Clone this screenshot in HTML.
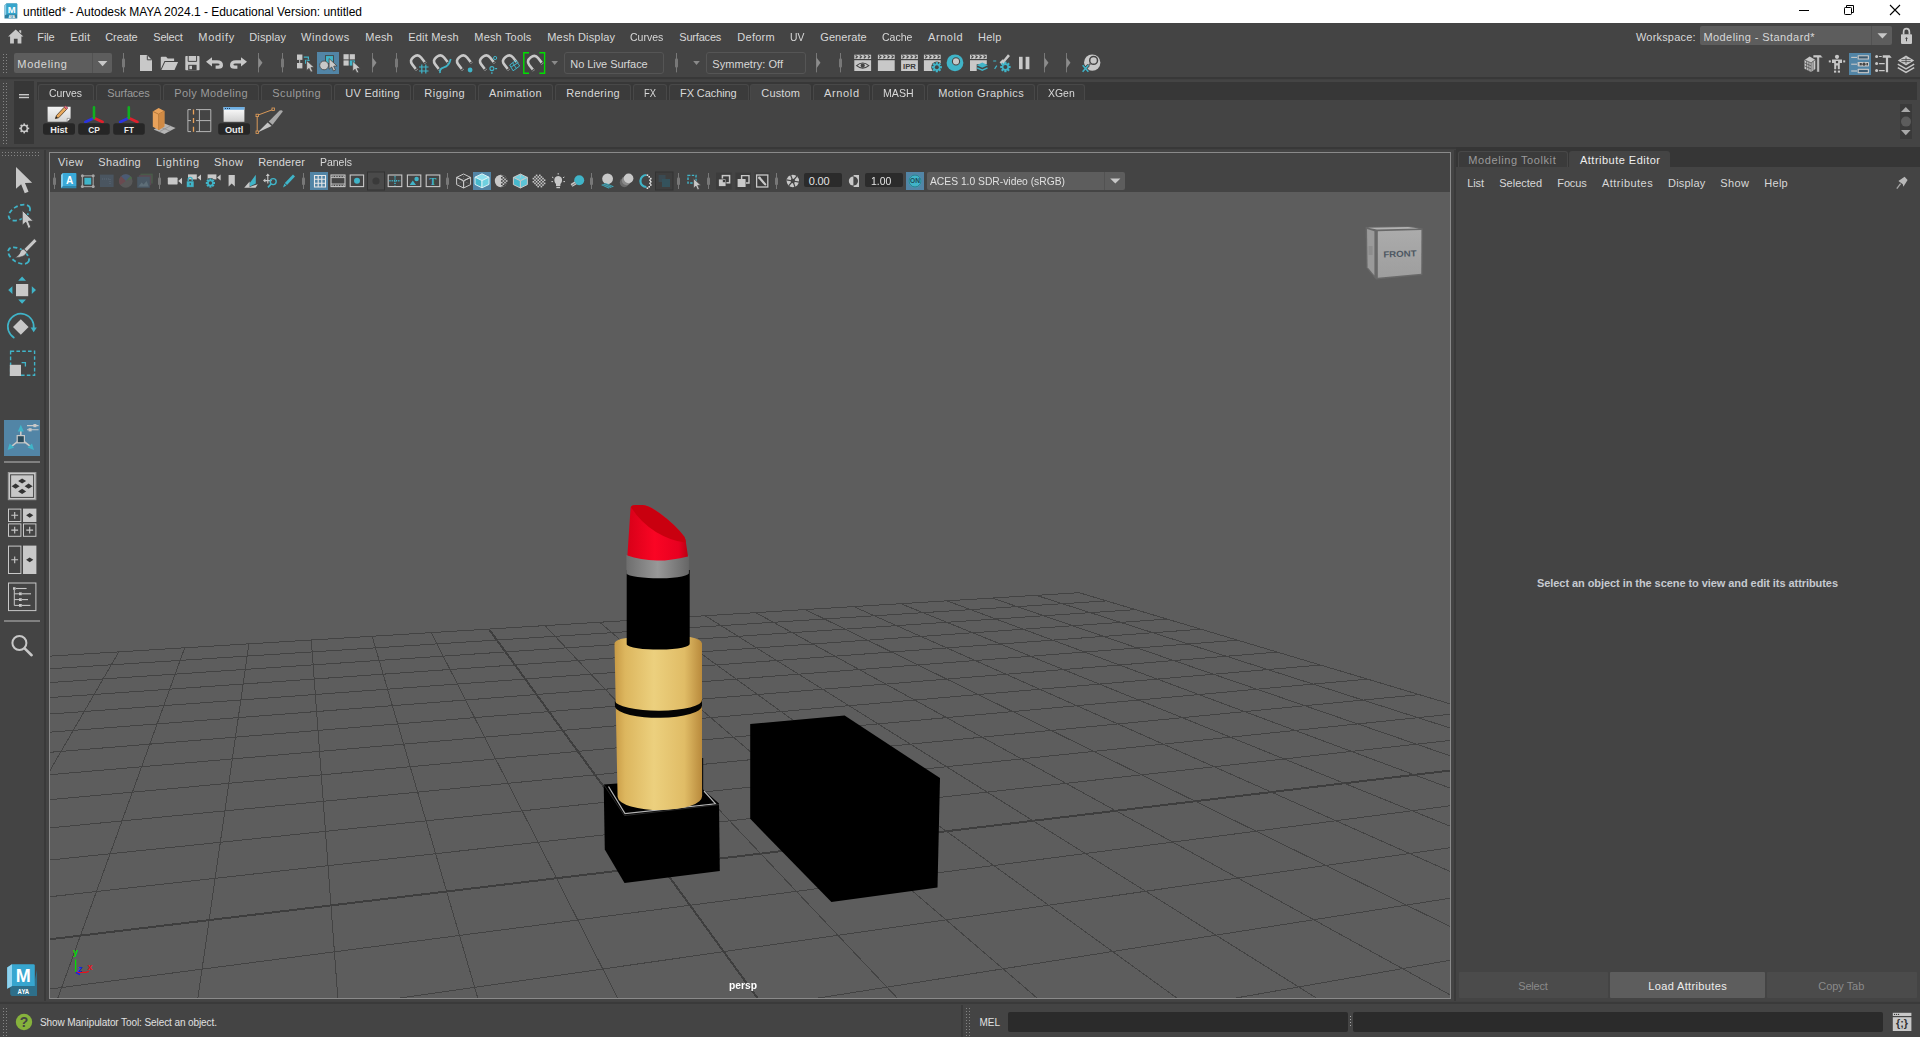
<!DOCTYPE html>
<html><head><meta charset="utf-8"><title>Maya</title>
<style>
html,body{margin:0;padding:0;}
body{width:1920px;height:1037px;overflow:hidden;background:#444444;position:relative;font-family:"Liberation Sans",sans-serif;}
body>div,body>span,body>svg{position:absolute;display:block;}
body>span{white-space:pre;}
svg{overflow:visible;}
</style></head><body>
<div style="left:0px;top:0px;width:1920px;height:23px;background:#ffffff;"></div>
<span style="left:23px;top:6px;font-size:12px;line-height:12px;color:#000000;letter-spacing:-0.023px;">untitled* - Autodesk MAYA 2024.1 - Educational Version: untitled</span>
<span style="left:37.3px;top:32px;font-size:11px;line-height:11px;color:#d8d8d8;letter-spacing:-0.108px;">File</span>
<span style="left:70.3px;top:32px;font-size:11px;line-height:11px;color:#d8d8d8;letter-spacing:0.248px;">Edit</span>
<span style="left:105.3px;top:32px;font-size:11px;line-height:11px;color:#d8d8d8;letter-spacing:-0.123px;">Create</span>
<span style="left:153.3px;top:32px;font-size:11px;line-height:11px;color:#d8d8d8;letter-spacing:-0.234px;">Select</span>
<span style="left:198.3px;top:32px;font-size:11px;line-height:11px;color:#d8d8d8;letter-spacing:0.720px;">Modify</span>
<span style="left:249.3px;top:32px;font-size:11px;line-height:11px;color:#d8d8d8;letter-spacing:0.106px;">Display</span>
<span style="left:301px;top:32px;font-size:11px;line-height:11px;color:#d8d8d8;letter-spacing:0.613px;">Windows</span>
<span style="left:365.3px;top:32px;font-size:11px;line-height:11px;color:#d8d8d8;letter-spacing:0.167px;">Mesh</span>
<span style="left:408.3px;top:32px;font-size:11px;line-height:11px;color:#d8d8d8;letter-spacing:0.186px;">Edit Mesh</span>
<span style="left:474.3px;top:32px;font-size:11px;line-height:11px;color:#d8d8d8;letter-spacing:0.174px;">Mesh Tools</span>
<span style="left:547.3px;top:32px;font-size:11px;line-height:11px;color:#d8d8d8;letter-spacing:0.153px;">Mesh Display</span>
<span style="left:630px;top:32px;font-size:11px;line-height:11px;color:#d8d8d8;transform:scaleX(0.9557);transform-origin:0 0;">Curves</span>
<span style="left:679.3px;top:32px;font-size:11px;line-height:11px;color:#d8d8d8;letter-spacing:-0.201px;">Surfaces</span>
<span style="left:737.3px;top:32px;font-size:11px;line-height:11px;color:#d8d8d8;letter-spacing:0.268px;">Deform</span>
<span style="left:790.3px;top:32px;font-size:11px;line-height:11px;color:#d8d8d8;transform:scaleX(0.9423);transform-origin:0 0;">UV</span>
<span style="left:820.3px;top:32px;font-size:11px;line-height:11px;color:#d8d8d8;letter-spacing:0.077px;">Generate</span>
<span style="left:882.3px;top:32px;font-size:11px;line-height:11px;color:#d8d8d8;transform:scaleX(0.9561);transform-origin:0 0;">Cache</span>
<span style="left:928px;top:32px;font-size:11px;line-height:11px;color:#d8d8d8;letter-spacing:0.581px;">Arnold</span>
<span style="left:978px;top:32px;font-size:11px;line-height:11px;color:#d8d8d8;letter-spacing:0.226px;">Help</span>
<span style="left:1636px;top:32px;font-size:11px;line-height:11px;color:#d8d8d8;letter-spacing:0.181px;">Workspace:</span>
<div style="left:1700px;top:26px;width:192px;height:19px;background:#5d5d5d;border-radius:2px;"></div>
<div style="left:1871px;top:26px;width:1px;height:19px;background:#525252;"></div>
<span style="left:1703.5px;top:32px;font-size:11px;line-height:11px;color:#d8d8d8;letter-spacing:0.403px;">Modeling - Standard*</span>
<div style="left:14px;top:53px;width:98px;height:20px;background:#5d5d5d;border-radius:2px;"></div>
<div style="left:92px;top:53px;width:1px;height:20px;background:#525252;"></div>
<span style="left:17.3px;top:59px;font-size:11px;line-height:11px;color:#d8d8d8;letter-spacing:0.709px;">Modeling</span>
<div style="left:564px;top:52px;width:100px;height:22px;background:#444444;border:1px solid #555555;border-radius:3px;box-sizing:border-box;"></div>
<span style="left:570.3px;top:59px;font-size:11px;line-height:11px;color:#d8d8d8;letter-spacing:-0.062px;">No Live Surface</span>
<div style="left:706px;top:52px;width:100px;height:22px;background:#444444;border:1px solid #555555;border-radius:3px;box-sizing:border-box;"></div>
<span style="left:712.3px;top:59px;font-size:11px;line-height:11px;color:#d8d8d8;letter-spacing:0.051px;">Symmetry: Off</span>
<div style="left:0px;top:77px;width:1920px;height:2px;background:#383838;"></div>
<div style="left:0px;top:79px;width:1920px;height:1px;background:#414141;"></div>
<div style="left:14px;top:81px;width:20px;height:63px;background:#373737;"></div>
<div style="left:37px;top:82px;width:1880px;height:18px;background:#373737;"></div>
<div style="left:38px;top:84px;width:56px;height:16px;background:#3b3b3b;border:1px solid #484848;border-bottom:none;border-radius:3px 3px 0 0;box-sizing:border-box;"></div>
<span style="left:49.3px;top:88px;font-size:11px;line-height:11px;color:#d8d8d8;transform:scaleX(0.9471);transform-origin:0 0;">Curves</span>
<div style="left:96px;top:84px;width:65px;height:16px;background:#3b3b3b;border:1px solid #484848;border-bottom:none;border-radius:3px 3px 0 0;box-sizing:border-box;"></div>
<span style="left:107.3px;top:88px;font-size:11px;line-height:11px;color:#9a9a9a;letter-spacing:-0.144px;">Surfaces</span>
<div style="left:163px;top:84px;width:96px;height:16px;background:#3b3b3b;border:1px solid #484848;border-bottom:none;border-radius:3px 3px 0 0;box-sizing:border-box;"></div>
<span style="left:174.3px;top:88px;font-size:11px;line-height:11px;color:#9a9a9a;letter-spacing:0.359px;">Poly Modeling</span>
<div style="left:261px;top:84px;width:71px;height:16px;background:#3b3b3b;border:1px solid #484848;border-bottom:none;border-radius:3px 3px 0 0;box-sizing:border-box;"></div>
<span style="left:272.3px;top:88px;font-size:11px;line-height:11px;color:#9a9a9a;letter-spacing:0.394px;">Sculpting</span>
<div style="left:334px;top:84px;width:77px;height:16px;background:#3b3b3b;border:1px solid #484848;border-bottom:none;border-radius:3px 3px 0 0;box-sizing:border-box;"></div>
<span style="left:345.3px;top:88px;font-size:11px;line-height:11px;color:#d8d8d8;letter-spacing:0.270px;">UV Editing</span>
<div style="left:413px;top:84px;width:63px;height:16px;background:#3b3b3b;border:1px solid #484848;border-bottom:none;border-radius:3px 3px 0 0;box-sizing:border-box;"></div>
<span style="left:424.3px;top:88px;font-size:11px;line-height:11px;color:#d8d8d8;letter-spacing:0.517px;">Rigging</span>
<div style="left:478px;top:84px;width:75px;height:16px;background:#3b3b3b;border:1px solid #484848;border-bottom:none;border-radius:3px 3px 0 0;box-sizing:border-box;"></div>
<span style="left:489px;top:88px;font-size:11px;line-height:11px;color:#d8d8d8;letter-spacing:0.473px;">Animation</span>
<div style="left:555px;top:84px;width:76px;height:16px;background:#3b3b3b;border:1px solid #484848;border-bottom:none;border-radius:3px 3px 0 0;box-sizing:border-box;"></div>
<span style="left:566.3px;top:88px;font-size:11px;line-height:11px;color:#d8d8d8;letter-spacing:0.331px;">Rendering</span>
<div style="left:633px;top:84px;width:34px;height:16px;background:#3b3b3b;border:1px solid #484848;border-bottom:none;border-radius:3px 3px 0 0;box-sizing:border-box;"></div>
<span style="left:644px;top:88px;font-size:11px;line-height:11px;color:#d8d8d8;transform:scaleX(0.8537);transform-origin:0 0;">FX</span>
<div style="left:669px;top:84px;width:80px;height:16px;background:#3b3b3b;border:1px solid #484848;border-bottom:none;border-radius:3px 3px 0 0;box-sizing:border-box;"></div>
<span style="left:680px;top:88px;font-size:11px;line-height:11px;color:#d8d8d8;letter-spacing:-0.085px;">FX Caching</span>
<div style="left:750px;top:84px;width:61px;height:16px;background:#444444;border:1px solid #484848;border-bottom:none;border-radius:3px 3px 0 0;box-sizing:border-box;"></div>
<span style="left:761.3px;top:88px;font-size:11px;line-height:11px;color:#d8d8d8;letter-spacing:0.160px;">Custom</span>
<div style="left:813px;top:84px;width:57px;height:16px;background:#3b3b3b;border:1px solid #484848;border-bottom:none;border-radius:3px 3px 0 0;box-sizing:border-box;"></div>
<span style="left:824px;top:88px;font-size:11px;line-height:11px;color:#d8d8d8;letter-spacing:0.641px;">Arnold</span>
<div style="left:872px;top:84px;width:53px;height:16px;background:#3b3b3b;border:1px solid #484848;border-bottom:none;border-radius:3px 3px 0 0;box-sizing:border-box;"></div>
<span style="left:883.3px;top:88px;font-size:11px;line-height:11px;color:#d8d8d8;transform:scaleX(0.9659);transform-origin:0 0;">MASH</span>
<div style="left:927px;top:84px;width:108px;height:16px;background:#3b3b3b;border:1px solid #484848;border-bottom:none;border-radius:3px 3px 0 0;box-sizing:border-box;"></div>
<span style="left:938.3px;top:88px;font-size:11px;line-height:11px;color:#d8d8d8;letter-spacing:0.379px;">Motion Graphics</span>
<div style="left:1037px;top:84px;width:48px;height:16px;background:#3b3b3b;border:1px solid #484848;border-bottom:none;border-radius:3px 3px 0 0;box-sizing:border-box;"></div>
<span style="left:1048px;top:88px;font-size:11px;line-height:11px;color:#d8d8d8;transform:scaleX(0.9492);transform-origin:0 0;">XGen</span>
<div style="left:0px;top:147px;width:1920px;height:2px;background:#383838;"></div>
<div style="left:0px;top:149px;width:1920px;height:1px;background:#414141;"></div>
<div style="left:44px;top:150px;width:2px;height:852px;background:#3a3a3a;"></div>
<div style="left:4px;top:420px;width:36px;height:36px;background:#5285a6;"></div>
<div style="left:4px;top:461px;width:36px;height:2px;background:#808080;"></div>
<div style="left:4px;top:620px;width:36px;height:2px;background:#808080;"></div>
<div style="left:49px;top:152px;width:1402px;height:847px;background:#444444;border:1px solid #8a8a8a;box-sizing:border-box;"></div>
<span style="left:58px;top:157px;font-size:11px;line-height:11px;color:#d8d8d8;letter-spacing:0.452px;">View</span>
<span style="left:98.3px;top:157px;font-size:11px;line-height:11px;color:#d8d8d8;letter-spacing:0.339px;">Shading</span>
<span style="left:156px;top:157px;font-size:11px;line-height:11px;color:#d8d8d8;letter-spacing:0.639px;">Lighting</span>
<span style="left:214px;top:157px;font-size:11px;line-height:11px;color:#d8d8d8;letter-spacing:0.495px;">Show</span>
<span style="left:258.3px;top:157px;font-size:11px;line-height:11px;color:#d8d8d8;letter-spacing:0.120px;">Renderer</span>
<span style="left:320.3px;top:157px;font-size:11px;line-height:11px;color:#d8d8d8;transform:scaleX(0.9515);transform-origin:0 0;">Panels</span>
<div style="left:1454px;top:150px;width:2px;height:852px;background:#3a3a3a;"></div>
<div style="left:1456px;top:147px;width:464px;height:20px;background:#363636;"></div>
<div style="left:1458px;top:151px;width:110px;height:16px;background:#3b3b3b;border:1px solid #484848;border-bottom:none;border-radius:3px 3px 0 0;box-sizing:border-box;"></div>
<div style="left:1569px;top:151px;width:101px;height:16px;background:#444444;border-radius:3px 3px 0 0;"></div>
<span style="left:1468.3px;top:155px;font-size:11px;line-height:11px;color:#9a9a9a;letter-spacing:0.582px;">Modeling Toolkit</span>
<span style="left:1580px;top:155px;font-size:11px;line-height:11px;color:#eeeeee;letter-spacing:0.483px;">Attribute Editor</span>
<span style="left:1467.3px;top:178px;font-size:11px;line-height:11px;color:#d8d8d8;letter-spacing:-0.139px;">List</span>
<span style="left:1499.3px;top:178px;font-size:11px;line-height:11px;color:#d8d8d8;letter-spacing:-0.015px;">Selected</span>
<span style="left:1557.3px;top:178px;font-size:11px;line-height:11px;color:#d8d8d8;letter-spacing:-0.138px;">Focus</span>
<span style="left:1602px;top:178px;font-size:11px;line-height:11px;color:#d8d8d8;letter-spacing:0.470px;">Attributes</span>
<span style="left:1668px;top:178px;font-size:11px;line-height:11px;color:#d8d8d8;letter-spacing:0.206px;">Display</span>
<span style="left:1720.3px;top:178px;font-size:11px;line-height:11px;color:#d8d8d8;letter-spacing:0.395px;">Show</span>
<span style="left:1764.3px;top:178px;font-size:11px;line-height:11px;color:#d8d8d8;letter-spacing:0.260px;">Help</span>
<span style="left:1537px;top:578px;font-size:11px;line-height:11px;color:#c6cad0;letter-spacing:-0.067px;font-weight:bold;">Select an object in the scene to view and edit its attributes</span>
<div style="left:1459px;top:972px;width:149px;height:26px;background:#4b4b4b;border-radius:1px;"></div>
<div style="left:1610px;top:972px;width:155px;height:26px;background:#5d5d5d;border-radius:1px;"></div>
<div style="left:1767px;top:972px;width:150px;height:26px;background:#4b4b4b;border-radius:1px;"></div>
<span style="left:1518.3px;top:981px;font-size:11px;line-height:11px;color:#8a8a8a;letter-spacing:-0.234px;">Select</span>
<span style="left:1648.3px;top:981px;font-size:11px;line-height:11px;color:#eeeeee;letter-spacing:0.358px;">Load Attributes</span>
<span style="left:1818.3px;top:981px;font-size:11px;line-height:11px;color:#8a8a8a;letter-spacing:-0.039px;">Copy Tab</span>
<div style="left:0px;top:1001px;width:1920px;height:1px;background:#424242;"></div>
<div style="left:0px;top:1002px;width:1920px;height:2px;background:#3a3a3a;"></div>
<div style="left:961px;top:1005px;width:2px;height:32px;background:#3a3a3a;"></div>
<span style="left:40px;top:1018px;font-size:10px;line-height:10px;color:#e0e0e0;letter-spacing:-0.090px;">Show Manipulator Tool: Select an object.</span>
<span style="left:979.5px;top:1018px;font-size:10px;line-height:10px;color:#e0e0e0;letter-spacing:-0.031px;">MEL</span>
<div style="left:1008px;top:1012px;width:340px;height:20px;background:#2b2b2b;border-radius:2px;"></div>
<div style="left:1353px;top:1012px;width:530px;height:20px;background:#2b2b2b;border-radius:2px;"></div>
<div style="left:804px;top:173px;width:38px;height:14px;background:#2b2b2b;border-radius:2px;"></div>
<div style="left:865px;top:173px;width:38px;height:14px;background:#2b2b2b;border-radius:2px;"></div>
<span style="left:808.8px;top:176px;font-size:11px;line-height:11px;color:#e4e4e4;letter-spacing:-0.203px;">0.00</span>
<span style="left:870.7px;top:176px;font-size:11px;line-height:11px;color:#e4e4e4;transform:scaleX(0.9482);transform-origin:0 0;">1.00</span>
<div style="left:927px;top:172px;width:198px;height:18px;background:#5d5d5d;border-radius:2px;"></div>
<div style="left:1104px;top:172px;width:1px;height:18px;background:#525252;"></div>
<span style="left:930px;top:176px;font-size:11px;line-height:11px;color:#e0e0e0;transform:scaleX(0.9358);transform-origin:0 0;">ACES 1.0 SDR-video (sRGB)</span>
<svg style="left:50px;top:192px;overflow:hidden" width="1400" height="806" viewBox="0 0 1400 806"><rect width="1400" height="806" fill="#5d5d5d"/><g shape-rendering="crispEdges"><line x1="-23795.3" y1="12871.6" x2="-369.8" y2="486.9" stroke="#434343" stroke-width="1"/><line x1="-1073.1" y1="12888.6" x2="4254.1" y2="1367.0" stroke="#434343" stroke-width="1"/><line x1="-21019.9" y1="12873.7" x2="-291.2" y2="482.1" stroke="#434343" stroke-width="1"/><line x1="-9327.9" y1="12882.4" x2="3669.9" y2="1192.0" stroke="#434343" stroke-width="1"/><line x1="-18244.5" y1="12875.8" x2="-214.9" y2="477.4" stroke="#434343" stroke-width="1"/><line x1="-17582.7" y1="12876.3" x2="3234.1" y2="1061.4" stroke="#434343" stroke-width="1"/><line x1="-15469.1" y1="12877.8" x2="-140.8" y2="472.8" stroke="#434343" stroke-width="1"/><line x1="-16370.1" y1="8946.0" x2="2896.6" y2="960.3" stroke="#434343" stroke-width="1"/><line x1="-12693.7" y1="12879.9" x2="-68.9" y2="468.4" stroke="#434343" stroke-width="1"/><line x1="-7146.2" y1="4069.5" x2="2627.5" y2="879.6" stroke="#434343" stroke-width="1"/><line x1="-9918.3" y1="12882.0" x2="0.9" y2="464.1" stroke="#434343" stroke-width="1"/><line x1="-4508.9" y1="2675.2" x2="2407.8" y2="813.8" stroke="#434343" stroke-width="1"/><line x1="-7142.9" y1="12884.0" x2="68.8" y2="459.9" stroke="#434343" stroke-width="1"/><line x1="-3259.4" y1="2014.6" x2="2225.2" y2="759.1" stroke="#434343" stroke-width="1"/><line x1="-4367.5" y1="12886.1" x2="134.7" y2="455.8" stroke="#434343" stroke-width="1"/><line x1="-2530.4" y1="1629.2" x2="2071.0" y2="712.9" stroke="#434343" stroke-width="1"/><line x1="-1592.1" y1="12888.2" x2="198.9" y2="451.9" stroke="#434343" stroke-width="1"/><line x1="-2052.8" y1="1376.6" x2="1939.0" y2="673.3" stroke="#434343" stroke-width="1"/><line x1="871.5" y1="8682.8" x2="261.3" y2="448.0" stroke="#434343" stroke-width="1"/><line x1="-1715.6" y1="1198.4" x2="1824.8" y2="639.1" stroke="#434343" stroke-width="1"/><line x1="2009.7" y1="6221.1" x2="322.1" y2="444.3" stroke="#434343" stroke-width="1"/><line x1="-1464.9" y1="1065.8" x2="1724.9" y2="609.2" stroke="#434343" stroke-width="1"/><line x1="2637.4" y1="4863.5" x2="381.2" y2="440.6" stroke="#434343" stroke-width="1"/><line x1="-1271.1" y1="963.4" x2="1636.9" y2="582.8" stroke="#434343" stroke-width="1"/><line x1="3035.2" y1="4003.3" x2="438.9" y2="437.1" stroke="#3e3e3e" stroke-width="2"/><line x1="-1116.9" y1="881.9" x2="1558.8" y2="559.4" stroke="#3e3e3e" stroke-width="2"/><line x1="3309.7" y1="3409.5" x2="495.0" y2="433.6" stroke="#434343" stroke-width="1"/><line x1="-991.2" y1="815.4" x2="1488.9" y2="538.5" stroke="#434343" stroke-width="1"/><line x1="3510.7" y1="2974.9" x2="549.7" y2="430.2" stroke="#434343" stroke-width="1"/><line x1="-886.9" y1="760.3" x2="1426.1" y2="519.6" stroke="#434343" stroke-width="1"/><line x1="3664.1" y1="2643.0" x2="603.1" y2="426.9" stroke="#434343" stroke-width="1"/><line x1="-798.8" y1="713.7" x2="1369.3" y2="502.6" stroke="#434343" stroke-width="1"/><line x1="3785.1" y1="2381.3" x2="655.1" y2="423.7" stroke="#434343" stroke-width="1"/><line x1="-723.5" y1="673.9" x2="1317.6" y2="487.1" stroke="#434343" stroke-width="1"/><line x1="3883.0" y1="2169.7" x2="705.8" y2="420.6" stroke="#434343" stroke-width="1"/><line x1="-658.4" y1="639.5" x2="1270.5" y2="473.0" stroke="#434343" stroke-width="1"/><line x1="3963.8" y1="1995.0" x2="755.4" y2="417.6" stroke="#434343" stroke-width="1"/><line x1="-601.5" y1="609.4" x2="1227.4" y2="460.1" stroke="#434343" stroke-width="1"/><line x1="4031.6" y1="1848.3" x2="803.7" y2="414.6" stroke="#434343" stroke-width="1"/><line x1="-551.4" y1="582.9" x2="1187.7" y2="448.2" stroke="#434343" stroke-width="1"/><line x1="4089.3" y1="1723.5" x2="850.9" y2="411.7" stroke="#434343" stroke-width="1"/><line x1="-506.9" y1="559.4" x2="1151.1" y2="437.2" stroke="#434343" stroke-width="1"/><line x1="4139.1" y1="1615.9" x2="897.0" y2="408.8" stroke="#434343" stroke-width="1"/><line x1="-467.2" y1="538.4" x2="1117.2" y2="427.1" stroke="#434343" stroke-width="1"/><line x1="4182.4" y1="1522.2" x2="942.1" y2="406.0" stroke="#434343" stroke-width="1"/><line x1="-431.5" y1="519.5" x2="1085.7" y2="417.6" stroke="#434343" stroke-width="1"/><line x1="4220.4" y1="1439.9" x2="986.1" y2="403.3" stroke="#434343" stroke-width="1"/><line x1="-399.2" y1="502.4" x2="1056.4" y2="408.9" stroke="#434343" stroke-width="1"/><line x1="4254.1" y1="1367.0" x2="1029.1" y2="400.7" stroke="#434343" stroke-width="1"/><line x1="-369.8" y1="486.9" x2="1029.1" y2="400.7" stroke="#434343" stroke-width="1"/></g><g id="models" transform="translate(-50,-192)"><defs>
<linearGradient id="gold" x1="0" x2="1" y1="0" y2="0"><stop offset="0" stop-color="#c89a45"/><stop offset="0.12" stop-color="#dcb65e"/><stop offset="0.45" stop-color="#ecd07e"/><stop offset="0.8" stop-color="#e0bc66"/><stop offset="1" stop-color="#b98a3c"/></linearGradient>
<linearGradient id="ring" x1="0" x2="1" y1="0" y2="0"><stop offset="0" stop-color="#6e6e6e"/><stop offset="0.5" stop-color="#989898"/><stop offset="1" stop-color="#666666"/></linearGradient>
<linearGradient id="red" x1="0" x2="1" y1="0" y2="0"><stop offset="0" stop-color="#d80018"/><stop offset="0.45" stop-color="#fa0524"/><stop offset="0.85" stop-color="#e80020"/><stop offset="1" stop-color="#b80012"/></linearGradient>
</defs><polygon points="750.2,724 844.6,715.5 940,778.1 937.5,887.4 831.4,902 750.2,818.8" fill="#000"/><polygon points="603.7,784.6 690,778 719,803.5 719.8,871 624.5,883 604.8,849.4" fill="#000"/><polyline points="608.5,786.5 625,813.5 715.5,803.8 704,791" fill="none" stroke="#b4b4b4" stroke-width="1.2"/><polyline points="604.2,785.2 624.5,815.6 719,804.6" fill="none" stroke="#2a2a2a" stroke-width="1"/><path d="M614.5,644 Q614.5,639 630,637.5 L690,637 Q701.8,639 702,643.5 L702,796 A42.2,13.6 0 0 1 617.6,797 Z" fill="url(#gold)"/><path d="M702.6,758 L702.6,796" stroke="#111" stroke-width="1.2"/><path d="M614.8,700.4 A43.6,10.6 0 0 0 702,699.8 L702,705.8 A43.6,12 0 0 1 615,707 Z" fill="#050505"/><path d="M626.7,570 L689.7,570 L689.7,643.6 A31.5,5.6 0 0 1 626.7,644.4 Z" fill="#000"/><path d="M626.4,555 L688.9,555.5 L688.9,572.6 A31.3,5.2 0 0 1 626.4,573.6 Z" fill="url(#ring)"/><path d="M630.6,507.5 Q631,505 636,505 L642.5,505 Q650,506 660,513.5 Q675,524.5 684.3,536.7 Q686,540 686,543 L688,556.4 Q672,560.5 657.2,560.6 Q640,560 627.4,555.6 Z" fill="url(#red)"/><path d="M631,507 Q631.5,505 636,505 L642.5,505 Q650,506 660,513.5 Q675,524.5 684.3,536.7 Q686,540 685.6,542.6 Q671,541 656,532 Q640,522 631,507 Z" fill="#c9000f"/></g></svg>
<span style="left:729px;top:980px;font-size:11px;line-height:11px;color:#ffffff;transform:scaleX(0.9348);transform-origin:0 0;font-weight:bold;">persp</span>
<svg style="left:0;top:0" width="1920" height="1037" viewBox="0 0 1920 1037"><g transform="translate(3.3,3)"><path d="M1.2,2.2 L3,0.6 L13.4,0.6 Q14,0.6 14,1.2 L14,15.4 L1.2,15.4 Z" fill="#2f7f9f"/><path d="M3,0.6 L13.2,0.6 Q13.8,0.6 13.8,1.2 L13.8,11.4 L3,11.4 Z" fill="#37a5cc"/><path d="M1.2,2.2 L3,0.6 L3,11.4 L1.2,12.6 Z" fill="#8fd0ea"/><text x="8.5" y="9.8" font-size="9.5" font-weight="bold" fill="#fff" text-anchor="middle" font-family="Liberation Sans, sans-serif">M</text><text x="8.4" y="14.8" font-size="3.4" font-weight="bold" fill="#fff" text-anchor="middle" font-family="Liberation Sans, sans-serif">AYA</text></g><path d="M1799,10.5 H1809" stroke="#000" stroke-width="1"/><rect x="1844.5" y="7.5" width="7" height="7" rx="0.8" fill="none" stroke="#000" stroke-width="1"/><path d="M1846.5,7 V5.5 H1853.5 V12.5 H1852" fill="none" stroke="#000" stroke-width="1"/><path d="M1890,5 L1900,15 M1900,5 L1890,15" stroke="#000" stroke-width="1.1"/><g transform="translate(8,29)"><path d="M7.7,0.4 L15.4,7.6 L13.4,7.6 L13.4,14.6 L9.6,14.6 L9.6,9.8 L5.9,9.8 L5.9,14.6 L2.1,14.6 L2.1,7.6 L0.1,7.6 Z M11.2,1.2 H13.2 V4.6 L11.2,2.8 Z" fill="#c8c8c8"/></g><path d="M1877.5,33.2 H1887.3 L1882.4,38.4 Z" fill="#c8c8c8"/><g transform="translate(1901,28)"><path d="M2.6,6.4 V4 Q2.6,0.6 5.5,0.6 Q8.4,0.6 8.4,4 V6.4" fill="none" stroke="#c8c8c8" stroke-width="1.7"/><rect x="0" y="6.3" width="11" height="9.6" rx="0.8" fill="#c8c8c8"/><path d="M5.5,9 L7,10.8 H6 V13.2 H5 V10.8 H4 Z" fill="#444"/></g><path d="M123.5,53 V72.4" stroke="#787878" stroke-width="1"/><rect x="122.0" y="58.6" width="3" height="8.8" rx="1" fill="#787878"/><path d="M282.5,53 V72.4" stroke="#787878" stroke-width="1"/><rect x="281.0" y="58.6" width="3" height="8.8" rx="1" fill="#787878"/><path d="M396.5,53 V72.4" stroke="#787878" stroke-width="1"/><rect x="395.0" y="58.6" width="3" height="8.8" rx="1" fill="#787878"/><path d="M676.5,53 V72.4" stroke="#787878" stroke-width="1"/><rect x="675.0" y="58.6" width="3" height="8.8" rx="1" fill="#787878"/><path d="M840.5,53 V72.4" stroke="#787878" stroke-width="1"/><rect x="839.0" y="58.6" width="3" height="8.8" rx="1" fill="#787878"/><path d="M258.5,53 V72.4" stroke="#787878" stroke-width="1"/><path d="M258.5,57.4 L262.5,62.8 L258.5,68.2 Z" fill="#8c8c8c"/><path d="M372.5,53 V72.4" stroke="#787878" stroke-width="1"/><path d="M372.5,57.4 L376.5,62.8 L372.5,68.2 Z" fill="#8c8c8c"/><path d="M816.5,53 V72.4" stroke="#787878" stroke-width="1"/><path d="M816.5,57.4 L820.5,62.8 L816.5,68.2 Z" fill="#8c8c8c"/><path d="M1044.5,53 V72.4" stroke="#787878" stroke-width="1"/><path d="M1044.5,57.4 L1048.5,62.8 L1044.5,68.2 Z" fill="#8c8c8c"/><path d="M1066.5,53 V72.4" stroke="#787878" stroke-width="1"/><path d="M1066.5,57.4 L1070.5,62.8 L1066.5,68.2 Z" fill="#8c8c8c"/><rect x="3" y="54" width="1" height="1" fill="#858585"/><rect x="6" y="54" width="1" height="1" fill="#858585"/><rect x="3" y="57" width="1" height="1" fill="#858585"/><rect x="6" y="57" width="1" height="1" fill="#858585"/><rect x="3" y="60" width="1" height="1" fill="#858585"/><rect x="6" y="60" width="1" height="1" fill="#858585"/><rect x="3" y="63" width="1" height="1" fill="#858585"/><rect x="6" y="63" width="1" height="1" fill="#858585"/><rect x="3" y="66" width="1" height="1" fill="#858585"/><rect x="6" y="66" width="1" height="1" fill="#858585"/><rect x="3" y="69" width="1" height="1" fill="#858585"/><rect x="6" y="69" width="1" height="1" fill="#858585"/><rect x="3" y="72" width="1" height="1" fill="#858585"/><rect x="6" y="72" width="1" height="1" fill="#858585"/><rect x="3" y="83" width="1" height="1" fill="#858585"/><rect x="6" y="83" width="1" height="1" fill="#858585"/><rect x="3" y="86" width="1" height="1" fill="#858585"/><rect x="6" y="86" width="1" height="1" fill="#858585"/><rect x="3" y="89" width="1" height="1" fill="#858585"/><rect x="6" y="89" width="1" height="1" fill="#858585"/><rect x="3" y="92" width="1" height="1" fill="#858585"/><rect x="6" y="92" width="1" height="1" fill="#858585"/><rect x="3" y="95" width="1" height="1" fill="#858585"/><rect x="6" y="95" width="1" height="1" fill="#858585"/><rect x="3" y="98" width="1" height="1" fill="#858585"/><rect x="6" y="98" width="1" height="1" fill="#858585"/><rect x="3" y="101" width="1" height="1" fill="#858585"/><rect x="6" y="101" width="1" height="1" fill="#858585"/><rect x="3" y="104" width="1" height="1" fill="#858585"/><rect x="6" y="104" width="1" height="1" fill="#858585"/><rect x="3" y="107" width="1" height="1" fill="#858585"/><rect x="6" y="107" width="1" height="1" fill="#858585"/><rect x="3" y="110" width="1" height="1" fill="#858585"/><rect x="6" y="110" width="1" height="1" fill="#858585"/><rect x="3" y="113" width="1" height="1" fill="#858585"/><rect x="6" y="113" width="1" height="1" fill="#858585"/><rect x="3" y="116" width="1" height="1" fill="#858585"/><rect x="6" y="116" width="1" height="1" fill="#858585"/><rect x="3" y="119" width="1" height="1" fill="#858585"/><rect x="6" y="119" width="1" height="1" fill="#858585"/><rect x="3" y="122" width="1" height="1" fill="#858585"/><rect x="6" y="122" width="1" height="1" fill="#858585"/><rect x="3" y="125" width="1" height="1" fill="#858585"/><rect x="6" y="125" width="1" height="1" fill="#858585"/><rect x="3" y="128" width="1" height="1" fill="#858585"/><rect x="6" y="128" width="1" height="1" fill="#858585"/><rect x="3" y="131" width="1" height="1" fill="#858585"/><rect x="6" y="131" width="1" height="1" fill="#858585"/><rect x="3" y="134" width="1" height="1" fill="#858585"/><rect x="6" y="134" width="1" height="1" fill="#858585"/><rect x="3" y="137" width="1" height="1" fill="#858585"/><rect x="6" y="137" width="1" height="1" fill="#858585"/><rect x="3" y="140" width="1" height="1" fill="#858585"/><rect x="6" y="140" width="1" height="1" fill="#858585"/><rect x="3" y="143" width="1" height="1" fill="#858585"/><rect x="6" y="143" width="1" height="1" fill="#858585"/><rect x="3" y="1008" width="1" height="1" fill="#858585"/><rect x="6" y="1008" width="1" height="1" fill="#858585"/><rect x="3" y="1011" width="1" height="1" fill="#858585"/><rect x="6" y="1011" width="1" height="1" fill="#858585"/><rect x="3" y="1014" width="1" height="1" fill="#858585"/><rect x="6" y="1014" width="1" height="1" fill="#858585"/><rect x="3" y="1017" width="1" height="1" fill="#858585"/><rect x="6" y="1017" width="1" height="1" fill="#858585"/><rect x="3" y="1020" width="1" height="1" fill="#858585"/><rect x="6" y="1020" width="1" height="1" fill="#858585"/><rect x="3" y="1023" width="1" height="1" fill="#858585"/><rect x="6" y="1023" width="1" height="1" fill="#858585"/><rect x="3" y="1026" width="1" height="1" fill="#858585"/><rect x="6" y="1026" width="1" height="1" fill="#858585"/><rect x="3" y="1029" width="1" height="1" fill="#858585"/><rect x="6" y="1029" width="1" height="1" fill="#858585"/><rect x="3" y="1032" width="1" height="1" fill="#858585"/><rect x="6" y="1032" width="1" height="1" fill="#858585"/><rect x="3" y="1035" width="1" height="1" fill="#858585"/><rect x="6" y="1035" width="1" height="1" fill="#858585"/><rect x="966" y="1008" width="1" height="1" fill="#858585"/><rect x="969" y="1008" width="1" height="1" fill="#858585"/><rect x="966" y="1011" width="1" height="1" fill="#858585"/><rect x="969" y="1011" width="1" height="1" fill="#858585"/><rect x="966" y="1014" width="1" height="1" fill="#858585"/><rect x="969" y="1014" width="1" height="1" fill="#858585"/><rect x="966" y="1017" width="1" height="1" fill="#858585"/><rect x="969" y="1017" width="1" height="1" fill="#858585"/><rect x="966" y="1020" width="1" height="1" fill="#858585"/><rect x="969" y="1020" width="1" height="1" fill="#858585"/><rect x="966" y="1023" width="1" height="1" fill="#858585"/><rect x="969" y="1023" width="1" height="1" fill="#858585"/><rect x="966" y="1026" width="1" height="1" fill="#858585"/><rect x="969" y="1026" width="1" height="1" fill="#858585"/><rect x="966" y="1029" width="1" height="1" fill="#858585"/><rect x="969" y="1029" width="1" height="1" fill="#858585"/><rect x="966" y="1032" width="1" height="1" fill="#858585"/><rect x="969" y="1032" width="1" height="1" fill="#858585"/><rect x="966" y="1035" width="1" height="1" fill="#858585"/><rect x="969" y="1035" width="1" height="1" fill="#858585"/><rect x="1350" y="1016" width="1" height="1" fill="#a8a8a8"/><rect x="1350" y="1019" width="1" height="1" fill="#a8a8a8"/><rect x="1350" y="1022" width="1" height="1" fill="#a8a8a8"/><rect x="1350" y="1025" width="1" height="1" fill="#a8a8a8"/><rect x="2" y="152" width="1" height="1" fill="#858585"/><rect x="2" y="155" width="1" height="1" fill="#858585"/><rect x="5" y="152" width="1" height="1" fill="#858585"/><rect x="5" y="155" width="1" height="1" fill="#858585"/><rect x="8" y="152" width="1" height="1" fill="#858585"/><rect x="8" y="155" width="1" height="1" fill="#858585"/><rect x="11" y="152" width="1" height="1" fill="#858585"/><rect x="11" y="155" width="1" height="1" fill="#858585"/><rect x="14" y="152" width="1" height="1" fill="#858585"/><rect x="14" y="155" width="1" height="1" fill="#858585"/><rect x="17" y="152" width="1" height="1" fill="#858585"/><rect x="17" y="155" width="1" height="1" fill="#858585"/><rect x="20" y="152" width="1" height="1" fill="#858585"/><rect x="20" y="155" width="1" height="1" fill="#858585"/><rect x="23" y="152" width="1" height="1" fill="#858585"/><rect x="23" y="155" width="1" height="1" fill="#858585"/><rect x="26" y="152" width="1" height="1" fill="#858585"/><rect x="26" y="155" width="1" height="1" fill="#858585"/><rect x="29" y="152" width="1" height="1" fill="#858585"/><rect x="29" y="155" width="1" height="1" fill="#858585"/><rect x="32" y="152" width="1" height="1" fill="#858585"/><rect x="32" y="155" width="1" height="1" fill="#858585"/><rect x="35" y="152" width="1" height="1" fill="#858585"/><rect x="35" y="155" width="1" height="1" fill="#858585"/><rect x="38" y="152" width="1" height="1" fill="#858585"/><rect x="38" y="155" width="1" height="1" fill="#858585"/><path d="M97.8,61 H107.4 L102.6,66.2 Z" fill="#c8c8c8"/><g transform="translate(139.5,55)"><path d="M0.5,0 H7.5 L12.5,5 V16 H0.5 Z" fill="#c8c8c8"/><path d="M7.8,0.4 V4.8 H12.2" fill="none" stroke="#444" stroke-width="1"/></g><g transform="translate(160.5,56.5)"><path d="M0.3,1 Q0.3,0.2 1.1,0.2 H5.6 L7.2,2 H13.6 V4.6 H4 L0.3,12.6 Z" fill="#c8c8c8"/><path d="M4.6,5.6 H17.6 L14,13.4 H0.9 Z" fill="#c8c8c8"/></g><g transform="translate(185,55.8)"><path d="M0.3,1 Q0.3,0.2 1.1,0.2 H13.7 Q14.5,0.2 14.5,1 V13.6 Q14.5,14.4 13.7,14.4 H1.1 Q0.3,14.4 0.3,13.6 Z" fill="#c8c8c8"/><path d="M3.2,0.2 V5.6 H11.6 V0.2" fill="none" stroke="#444" stroke-width="1"/><rect x="3.2" y="9" width="8.4" height="5.4" fill="#444"/><rect x="4.4" y="10" width="2.6" height="3.4" fill="#c8c8c8"/></g><g transform="translate(206,57.2)"><path d="M6,0 L6,3 H11 Q17,3 17,8 Q17,11.6 12.6,11.6 H9.6 V8.4 H12 Q13.6,8.4 13.6,7.4 Q13.6,6.2 11.6,6.2 H6 V9.2 L0,4.6 Z" fill="#c8c8c8"/></g><g transform="translate(247,57.2) scale(-1,1)"><path d="M6,0 L6,3 H11 Q17,3 17,8 Q17,11.6 12.6,11.6 H9.6 V8.4 H12 Q13.6,8.4 13.6,7.4 Q13.6,6.2 11.6,6.2 H6 V9.2 L0,4.6 Z" fill="#c8c8c8"/></g><g transform="translate(297,54)"><rect x="0" y="0.5" width="5.4" height="5.4" fill="#c8c8c8"/><rect x="0" y="9" width="5.4" height="5.4" fill="#c8c8c8"/><path d="M2.7,6 V9" stroke="#c8c8c8" stroke-width="1"/><path d="M6.8,3.2 H11.4 V5.4" fill="none" stroke="#40b4c8" stroke-width="1.2"/><path d="M8.6,9.8 V6.4 H12.6" fill="none" stroke="#40b4c8" stroke-width="1.2"/><path transform="translate(9.6,6.4) scale(0.95)" d="M0,0 L0,10.6 L2.6,8.4 L4.4,12.4 L6.4,11.5 L4.6,7.6 L8,7.4 Z" fill="#c8c8c8" stroke="#444" stroke-width="0.8"/></g><rect x="317" y="52" width="22" height="22" fill="#5285a6"/><g transform="translate(319.5,55)"><rect x="6" y="0.6" width="8" height="8" fill="#40b4c8" stroke="#444" stroke-width="0.9"/><circle cx="4.6" cy="10.4" r="4.4" fill="#c8c8c8" stroke="#444" stroke-width="0.8"/><path transform="translate(9.6,3.6) scale(1.0)" d="M0,0 L0,10.6 L2.6,8.4 L4.4,12.4 L6.4,11.5 L4.6,7.6 L8,7.4 Z" fill="#c8c8c8" stroke="#444" stroke-width="0.8"/></g><g transform="translate(343.5,54)"><rect x="0" y="0.2" width="5.2" height="5.2" fill="#c8c8c8"/><rect x="6.2" y="0.2" width="5.2" height="5.2" fill="#c8c8c8"/><rect x="0" y="6.4" width="5.2" height="5.2" fill="#c8c8c8"/><rect x="6.2" y="6.4" width="5.2" height="5.2" fill="#40b4c8"/><path transform="translate(9.2,7.2) scale(0.95)" d="M0,0 L0,10.6 L2.6,8.4 L4.4,12.4 L6.4,11.5 L4.6,7.6 L8,7.4 Z" fill="#c8c8c8" stroke="#444" stroke-width="0.8"/></g><g transform="translate(409.5,54)"><g transform="rotate(-38 8 8)"><path d="M2.4,14 V6.6 Q2.4,1.6 8,1.6 Q13.6,1.6 13.6,6.6 V14" fill="none" stroke="#c8c8c8" stroke-width="2.6"/><rect x="1.1" y="12.4" width="2.6" height="1.2" fill="#444"/><rect x="12.3" y="12.4" width="2.6" height="1.2" fill="#444"/></g><path d="M9.5,13 H19 M9.5,17 H19 M12.3,10.6 V19.6 M16.3,10.6 V19.6" stroke="#40b4c8" stroke-width="1.2" fill="none"/></g><g transform="translate(432.5,54)"><g transform="rotate(-38 8 8)"><path d="M2.4,14 V6.6 Q2.4,1.6 8,1.6 Q13.6,1.6 13.6,6.6 V14" fill="none" stroke="#c8c8c8" stroke-width="2.6"/><rect x="1.1" y="12.4" width="2.6" height="1.2" fill="#444"/><rect x="12.3" y="12.4" width="2.6" height="1.2" fill="#444"/></g><path d="M7.6,19 Q6.6,14.6 11.4,13.4 Q16.6,12.2 18.2,5" stroke="#40b4c8" stroke-width="1.7" fill="none"/></g><g transform="translate(455.5,54)"><g transform="rotate(-38 8 8)"><path d="M2.4,14 V6.6 Q2.4,1.6 8,1.6 Q13.6,1.6 13.6,6.6 V14" fill="none" stroke="#c8c8c8" stroke-width="2.6"/><rect x="1.1" y="12.4" width="2.6" height="1.2" fill="#444"/><rect x="12.3" y="12.4" width="2.6" height="1.2" fill="#444"/></g><circle cx="14.6" cy="16" r="2.4" fill="#40b4c8"/></g><g transform="translate(478.5,54)"><g transform="rotate(-38 8 8)"><path d="M2.4,14 V6.6 Q2.4,1.6 8,1.6 Q13.6,1.6 13.6,6.6 V14" fill="none" stroke="#c8c8c8" stroke-width="2.6"/><rect x="1.1" y="12.4" width="2.6" height="1.2" fill="#444"/><rect x="12.3" y="12.4" width="2.6" height="1.2" fill="#444"/></g><circle cx="13.4" cy="14.6" r="2" fill="none" stroke="#40b4c8" stroke-width="1.1"/><path d="M13.4,18 V20 M16.6,14.6 H18.6" stroke="#40b4c8" stroke-width="1.1"/><circle cx="16.6" cy="4" r="1.6" fill="none" stroke="#40b4c8" stroke-width="1"/></g><g transform="translate(501.5,54)"><g transform="rotate(-38 8 8)"><path d="M2.4,14 V6.6 Q2.4,1.6 8,1.6 Q13.6,1.6 13.6,6.6 V14" fill="none" stroke="#c8c8c8" stroke-width="2.6"/><rect x="1.1" y="12.4" width="2.6" height="1.2" fill="#444"/><rect x="12.3" y="12.4" width="2.6" height="1.2" fill="#444"/></g><path d="M8.2,11 L14.4,6.4 L18.2,12 L11.6,16.8 Z M11.2,8.8 L14.8,14.4 M9.6,13 L16.2,9" stroke="#40b4c8" stroke-width="1" fill="none"/></g><g transform="translate(526.5,54.6)"><g transform="rotate(-38 8 8)"><path d="M2.4,14 V6.6 Q2.4,1.6 8,1.6 Q13.6,1.6 13.6,6.6 V14" fill="none" stroke="#c8c8c8" stroke-width="2.6"/><rect x="1.1" y="12.4" width="2.6" height="1.2" fill="#444"/><rect x="12.3" y="12.4" width="2.6" height="1.2" fill="#444"/></g></g><path d="M529,52.8 H523.8 V73.2 H529 M539.4,52.8 H544.6 V73.2 H539.4" fill="none" stroke="#00e000" stroke-width="1.4"/><path d="M551.4,61 H558 L554.7,65 Z" fill="#8a8a8a"/><path d="M693.2,61 H699.8 L696.5,65 Z" fill="#8a8a8a"/><g transform="translate(854,54.2)"><rect x="0.3" y="0.5" width="16.8" height="4.3" fill="#c8c8c8"/><path d="M1.6,1.2 L3.4,2.65 L1.6,4.1" fill="none" stroke="#444" stroke-width="1.1"/><path d="M5.699999999999999,1.2 L7.5,2.65 L5.699999999999999,4.1" fill="none" stroke="#444" stroke-width="1.1"/><path d="M9.799999999999999,1.2 L11.6,2.65 L9.799999999999999,4.1" fill="none" stroke="#444" stroke-width="1.1"/><path d="M13.899999999999999,1.2 L15.7,2.65 L13.899999999999999,4.1" fill="none" stroke="#444" stroke-width="1.1"/><rect x="0.3" y="6" width="16.8" height="10.8" fill="#c8c8c8"/><path d="M2.6,11.4 Q8.7,6.2 14.8,11.4 Q8.7,16.4 2.6,11.4 Z" fill="none" stroke="#444" stroke-width="1.1"/><circle cx="8.7" cy="11.4" r="2.1" fill="#444"/></g><g transform="translate(877.6,54.2)"><rect x="0.3" y="0.5" width="16.8" height="4.3" fill="#c8c8c8"/><path d="M1.6,1.2 L3.4,2.65 L1.6,4.1" fill="none" stroke="#444" stroke-width="1.1"/><path d="M5.699999999999999,1.2 L7.5,2.65 L5.699999999999999,4.1" fill="none" stroke="#444" stroke-width="1.1"/><path d="M9.799999999999999,1.2 L11.6,2.65 L9.799999999999999,4.1" fill="none" stroke="#444" stroke-width="1.1"/><path d="M13.899999999999999,1.2 L15.7,2.65 L13.899999999999999,4.1" fill="none" stroke="#444" stroke-width="1.1"/><rect x="0.3" y="6" width="16.8" height="10.8" fill="#c8c8c8"/></g><g transform="translate(900.8,54.2)"><rect x="0.3" y="0.5" width="16.8" height="4.3" fill="#c8c8c8"/><path d="M1.6,1.2 L3.4,2.65 L1.6,4.1" fill="none" stroke="#444" stroke-width="1.1"/><path d="M5.699999999999999,1.2 L7.5,2.65 L5.699999999999999,4.1" fill="none" stroke="#444" stroke-width="1.1"/><path d="M9.799999999999999,1.2 L11.6,2.65 L9.799999999999999,4.1" fill="none" stroke="#444" stroke-width="1.1"/><path d="M13.899999999999999,1.2 L15.7,2.65 L13.899999999999999,4.1" fill="none" stroke="#444" stroke-width="1.1"/><rect x="0.3" y="6" width="16.8" height="10.8" fill="#c8c8c8"/><text x="8.7" y="14.6" font-size="8" font-weight="bold" fill="#3c3c3c" text-anchor="middle" font-family="Liberation Sans, sans-serif" textLength="13" lengthAdjust="spacingAndGlyphs">IPR</text></g><g transform="translate(923.6,54.2)"><rect x="0.3" y="0.5" width="16.8" height="4.3" fill="#c8c8c8"/><path d="M1.6,1.2 L3.4,2.65 L1.6,4.1" fill="none" stroke="#444" stroke-width="1.1"/><path d="M5.699999999999999,1.2 L7.5,2.65 L5.699999999999999,4.1" fill="none" stroke="#444" stroke-width="1.1"/><path d="M9.799999999999999,1.2 L11.6,2.65 L9.799999999999999,4.1" fill="none" stroke="#444" stroke-width="1.1"/><path d="M13.899999999999999,1.2 L15.7,2.65 L13.899999999999999,4.1" fill="none" stroke="#444" stroke-width="1.1"/><rect x="0.3" y="6" width="16.8" height="10.8" fill="#c8c8c8"/><circle cx="13.2" cy="13" r="5.6" fill="#444"/><rect x="12.1" y="7.9" width="2.2" height="10.2" fill="#40b4c8" transform="rotate(0 13.2 13)"/><rect x="12.1" y="7.9" width="2.2" height="10.2" fill="#40b4c8" transform="rotate(45 13.2 13)"/><rect x="12.1" y="7.9" width="2.2" height="10.2" fill="#40b4c8" transform="rotate(90 13.2 13)"/><rect x="12.1" y="7.9" width="2.2" height="10.2" fill="#40b4c8" transform="rotate(135 13.2 13)"/><circle cx="13.2" cy="13" r="3.5" fill="#40b4c8"/><circle cx="13.2" cy="13" r="1.9600000000000002" fill="#444"/></g><circle cx="955" cy="62.8" r="8.4" fill="#40b4c8"/><circle cx="956" cy="61.4" r="3.6" fill="#c8c8c8" stroke="#444" stroke-width="1.1"/><g transform="translate(969.7,54.2)"><rect x="0.3" y="0.5" width="16.8" height="4.3" fill="#c8c8c8"/><path d="M1.6,1.2 L3.4,2.65 L1.6,4.1" fill="none" stroke="#444" stroke-width="1.1"/><path d="M5.699999999999999,1.2 L7.5,2.65 L5.699999999999999,4.1" fill="none" stroke="#444" stroke-width="1.1"/><path d="M9.799999999999999,1.2 L11.6,2.65 L9.799999999999999,4.1" fill="none" stroke="#444" stroke-width="1.1"/><path d="M13.899999999999999,1.2 L15.7,2.65 L13.899999999999999,4.1" fill="none" stroke="#444" stroke-width="1.1"/><rect x="0.3" y="6" width="16.8" height="10.8" fill="#c8c8c8"/><path d="M7,10 L17.8,10 L17.8,17.4 L7,17.4 Z" fill="#444"/><path d="M12.6,8.4 L18.2,11 L12.6,13.6 L7,11 Z" fill="#40b4c8"/><path d="M7.4,13.6 L12.6,16 L17.8,13.6" fill="none" stroke="#40b4c8" stroke-width="1.4"/></g><g transform="translate(992.6,53.6)"><path d="M15.4,0.6 L17.4,2.4 L12.6,8 L13.4,9 L9.6,11.6 L7,8.6 L10.2,5.6 L11,6.2 Z" fill="#c8c8c8"/><path d="M0.6,7.4 H3.6 M4.2,12 L2,15.2" stroke="#40b4c8" stroke-width="1.2"/><rect x="11.700000000000001" y="8.200000000000001" width="2.2" height="10.4" fill="#40b4c8" transform="rotate(0 12.8 13.4)"/><rect x="11.700000000000001" y="8.200000000000001" width="2.2" height="10.4" fill="#40b4c8" transform="rotate(45 12.8 13.4)"/><rect x="11.700000000000001" y="8.200000000000001" width="2.2" height="10.4" fill="#40b4c8" transform="rotate(90 12.8 13.4)"/><rect x="11.700000000000001" y="8.200000000000001" width="2.2" height="10.4" fill="#40b4c8" transform="rotate(135 12.8 13.4)"/><circle cx="12.8" cy="13.4" r="3.6" fill="#40b4c8"/><circle cx="12.8" cy="13.4" r="2.0160000000000005" fill="#444"/></g><rect x="1019" y="56.8" width="3.6" height="12.4" fill="#c8c8c8"/><rect x="1025.6" y="56.8" width="3.8" height="12.4" fill="#c8c8c8"/><g transform="translate(1082,54)"><circle cx="10.2" cy="8.6" r="8.2" fill="#c8c8c8"/><circle cx="11.6" cy="6.4" r="3.9" fill="none" stroke="#444" stroke-width="1.5"/><path d="M8.6,9.4 L6.2,11.8" stroke="#666" stroke-width="1.6"/><path d="M0.4,11 L6.6,18 M6.6,11 L0.4,18" stroke="#444" stroke-width="3.2"/><path d="M0.6,11.2 L6.4,17.8 M6.4,11.2 L0.6,17.8" stroke="#40b4c8" stroke-width="1.5"/></g><g transform="translate(1804.5,54.5)"><path d="M0,5.4 L5.2,2 L10.8,5.2 L10.8,14.4 L6.6,17.6 L0,14.2 Z" fill="#c8c8c8"/><path d="M0,5.4 L6.6,8.4 L10.8,5.2 M6.6,8.4 V17.6 M2.2,6.4 V15.4 M4.4,7.4 V16.5 M0,8.4 L6.6,11.4 M0,11.4 L6.6,14.4 M8.6,6.8 V16" stroke="#444" stroke-width="0.7" fill="none"/><path d="M8.6,0.4 H16.2 L18.4,3.2 H14.8 V17.6 H12.4 V3.2 H8.6 Z" fill="#c8c8c8" stroke="#444" stroke-width="0.5"/></g><g transform="translate(1828.6,54.6)"><circle cx="8.4" cy="2.2" r="2.1" fill="#c8c8c8"/><path d="M3.4,5 H13.4 V8.4 H11.2 V14.6 H9.2 V11 H7.6 V14.6 H5.6 V8.4 H3.4 Z" fill="#c8c8c8"/><rect x="7.3" y="6.4" width="2.2" height="2.2" fill="#444"/><rect x="0.2" y="5.8" width="2" height="2" fill="#c8c8c8"/><rect x="14.6" y="5.8" width="2" height="2" fill="#c8c8c8"/><rect x="5.4" y="16" width="2.2" height="2" fill="#c8c8c8"/><rect x="9.2" y="16" width="2.2" height="2" fill="#c8c8c8"/></g><rect x="1849" y="53" width="22" height="22" fill="#5285a6"/><g transform="translate(1849,53)"><path d="M2.2,4.4 H8" stroke="#c8c8c8" stroke-width="1.1"/><rect x="8.6" y="2.2" width="11.4" height="4.4" rx="0.6" fill="#c8c8c8"/><rect x="9.8" y="3.3000000000000003" width="9" height="2.2" fill="#3c5a70"/><path d="M2.2,11.2 H8" stroke="#c8c8c8" stroke-width="1.1"/><rect x="8.6" y="9" width="11.4" height="4.4" rx="0.6" fill="#c8c8c8"/><rect x="10.6" y="10" width="2.2" height="2.4" fill="#444"/><circle cx="15" cy="11.2" r="1.6" fill="#444"/><rect x="17.4" y="10" width="1.6" height="2.4" fill="#444"/><path d="M2.2,18.0 H8" stroke="#c8c8c8" stroke-width="1.1"/><rect x="8.6" y="15.8" width="11.4" height="4.4" rx="0.6" fill="#c8c8c8"/><rect x="9.8" y="16.900000000000002" width="9" height="2.2" fill="#3c5a70"/></g><g transform="translate(1874.7,54.6)"><circle cx="1.9" cy="1.9" r="1.5" fill="#c8c8c8"/><circle cx="1.9" cy="9" r="1.5" fill="#c8c8c8"/><circle cx="1.9" cy="16" r="1.5" fill="#c8c8c8"/><path d="M4.4,1.9 H7 M4.4,9 H10 M4.4,16 H10" stroke="#c8c8c8" stroke-width="1.1"/><path d="M8,0.6 H15 L17,3.2 H13.4 V17.6 H11.2 V3.2 H8 Z" fill="#c8c8c8"/></g><g transform="translate(1897.8,55.6)"><path d="M8.2,0 L16.4,5 L8.2,10 L0,5 Z" fill="#c8c8c8"/><path d="M3.6,4 H12.8 M3.6,6 H12.8 M8.2,2 V8" stroke="#444" stroke-width="0.8"/><path d="M0,8.6 L8.2,13.4 L16.4,8.6 M0,12 L8.2,16.8 L16.4,12" fill="none" stroke="#c8c8c8" stroke-width="1.5"/></g><rect x="19" y="94" width="10" height="1.4" fill="#c8c8c8"/><rect x="19" y="96.8" width="10" height="1.4" fill="#c8c8c8"/><rect x="23.4" y="123.4" width="1.6" height="10" fill="#c8c8c8" transform="rotate(0 24.2 128.4)"/><rect x="23.4" y="123.4" width="1.6" height="10" fill="#c8c8c8" transform="rotate(45 24.2 128.4)"/><rect x="23.4" y="123.4" width="1.6" height="10" fill="#c8c8c8" transform="rotate(90 24.2 128.4)"/><rect x="23.4" y="123.4" width="1.6" height="10" fill="#c8c8c8" transform="rotate(135 24.2 128.4)"/><circle cx="24.2" cy="128.4" r="3.1" fill="none" stroke="#c8c8c8" stroke-width="1.5"/><circle cx="24.2" cy="128.4" r="2.3" fill="#373737"/><rect x="1900" y="104" width="12" height="35" fill="#3a3a3a"/><path d="M1901,112 L1905.8,107 L1910.6,112 Z" fill="#a8a8a8"/><circle cx="1906" cy="121.6" r="5" fill="#5c5c5c"/><path d="M1901,130 H1910.6 L1905.8,135.2 Z" fill="#a8a8a8"/><defs><linearGradient id="paper" x1="0" x2="0" y1="0" y2="1"><stop offset="0" stop-color="#f4f4f4"/><stop offset="1" stop-color="#d4d4d4"/></linearGradient><linearGradient id="win" x1="0" x2="0" y1="0" y2="1"><stop offset="0" stop-color="#ffffff"/><stop offset="1" stop-color="#d0d0d0"/></linearGradient></defs><path d="M47.6,106.8 H70.6 V118.6 L67.4,121.8 H47.6 Z" fill="url(#paper)"/><path d="M67.2,118.4 H70.6 L67.2,121.8 Z" fill="#fff" stroke="#555" stroke-width="0.5"/><path d="M55.4,118.6 L56.4,115.6 L64.2,107.2 L66.6,109.4 L58.6,117.8 Z" fill="#e8a85c" stroke="#3a2a1a" stroke-width="0.7"/><path d="M55.4,118.6 L56.2,116.2 L57.8,117.8 Z" fill="#222"/><path d="M64.2,107.2 L65.4,105.8 L68,108 L66.6,109.4 Z" fill="#e87080" stroke="#803040" stroke-width="0.5"/><rect x="43" y="123.3" width="32" height="11.4" rx="2.6" fill="#262626"/><text x="59.0" y="132.9" font-family="Liberation Sans, sans-serif" font-weight="bold" font-size="9.4" fill="#ececec" text-anchor="middle" textLength="17.4" lengthAdjust="spacingAndGlyphs">Hist</text><path d="M94,118 L85.4,122" stroke="#2a34e0" stroke-width="2.8" stroke-linecap="round"/><path d="M94,118 L102.6,122" stroke="#e0202c" stroke-width="2.8" stroke-linecap="round"/><path d="M94,118 V107.4" stroke="#10b020" stroke-width="2.6" stroke-linecap="round"/><rect x="78.2" y="123.3" width="31.599999999999994" height="11.4" rx="2.6" fill="#262626"/><text x="94.0" y="132.9" font-family="Liberation Sans, sans-serif" font-weight="bold" font-size="9.4" fill="#ececec" text-anchor="middle" textLength="11.6" lengthAdjust="spacingAndGlyphs">CP</text><path d="M128.8,118 L120.20000000000002,122" stroke="#2a34e0" stroke-width="2.8" stroke-linecap="round"/><path d="M128.8,118 L137.4,122" stroke="#e0202c" stroke-width="2.8" stroke-linecap="round"/><path d="M128.8,118 V107.4" stroke="#10b020" stroke-width="2.6" stroke-linecap="round"/><rect x="113.2" y="123.3" width="31.60000000000001" height="11.4" rx="2.6" fill="#262626"/><text x="129.0" y="132.9" font-family="Liberation Sans, sans-serif" font-weight="bold" font-size="9.4" fill="#ececec" text-anchor="middle" textLength="9.8" lengthAdjust="spacingAndGlyphs">FT</text><path d="M164.6,123.6 L175.6,128 L164.4,134 L153.6,129.4 Z" fill="#b4b4b4"/><path d="M159,126.6 L170,131 M159.4,131.8 L170.4,125.8" stroke="#8a8a8a" stroke-width="0.7"/><path d="M152.8,111.4 L158.6,107.9 L164.4,111 L164.4,126.6 L158.8,130 L152.8,126.8 Z" fill="#e9a25a"/><path d="M158.6,114.2 L158.8,130 M152.8,111.4 L158.6,114.2 L164.4,111" fill="none" stroke="#a86c30" stroke-width="0.8"/><path d="M158.6,114.2 L164.4,111 L164.4,126.6 L158.8,130 Z" fill="#d08a44"/><path d="M191,109.6 H187.9 V131.6 H191 M196,109.6 H210.8 V131.6 H196 M196,120.6 H210.8 M199.4,109.6 V131.6 M187.9,120.6 H191" fill="none" stroke="#b4b4b4" stroke-width="1"/><path d="M193.5,109.4 V114.4 M193.5,118 V123 M193.5,126.8 V131.8" stroke="#e9a25a" stroke-width="1.3"/><rect x="223.6" y="107" width="20.8" height="14.8" fill="url(#win)"/><rect x="223.6" y="107" width="20.8" height="2.8" fill="#6fb0e4"/><rect x="225" y="108" width="1" height="1" fill="#246"/><rect x="227" y="108" width="1" height="1" fill="#246"/><rect x="229" y="108" width="1" height="1" fill="#246"/><rect x="218.2" y="123.3" width="31.80000000000001" height="11.4" rx="2.6" fill="#262626"/><text x="234.1" y="132.9" font-family="Liberation Sans, sans-serif" font-weight="bold" font-size="9.4" fill="#ececec" text-anchor="middle" textLength="18.4" lengthAdjust="spacingAndGlyphs">Outl</text><path d="M257.6,132.4 L267.6,122.6 L271.6,126 Z" fill="#c4c4c4"/><path d="M268.8,121.4 L279.6,110.6 Q282,109.4 282.8,111.6 L272.6,124.8 Z" fill="#a8a8a8"/><path d="M257.2,116 V132 M257.2,115.4 L273.2,109.4" stroke="#e9a25a" stroke-width="0.9" fill="none"/><rect x="256" y="114.2" width="2.4" height="2.4" fill="#444" stroke="#e9a25a" stroke-width="0.8"/><rect x="272" y="108" width="2.4" height="2.4" fill="#444" stroke="#e9a25a" stroke-width="0.8"/><rect x="256" y="131" width="2.4" height="2.4" fill="#444" stroke="#e9a25a" stroke-width="0.8"/><path transform="translate(16,167) scale(1.12)" d="M0,0 L0,19.4 L4.6,15.4 L7.8,23.4 L11.2,22 L8,14.2 L14.4,14 Z" fill="#c8c8c8"/><ellipse cx="19.4" cy="212.6" rx="11.6" ry="6.6" transform="rotate(-28 19.4 212.6)" fill="none" stroke="#40b4c8" stroke-width="1.8" stroke-dasharray="4.2 2.6"/><path transform="translate(22.2,210.2) scale(0.78)" d="M0,0 L0,19.4 L4.6,15.4 L7.8,23.4 L11.2,22 L8,14.2 L14.4,14 Z" fill="#c8c8c8" stroke="#444" stroke-width="1.2"/><ellipse cx="18.6" cy="255.6" rx="11.6" ry="6.6" transform="rotate(32 18.6 255.6)" fill="none" stroke="#40b4c8" stroke-width="1.8" stroke-dasharray="4.2 2.6"/><path d="M34.4,238.8 L36.8,241.2 L26.8,251.6 L24.2,249 Z" fill="#c8c8c8" stroke="#444" stroke-width="0.6"/><path d="M23.8,249.2 L26.8,252.2 Q25,257.6 15.4,257.4 Q20.2,254.4 20.4,251.6 Q21.4,249 23.8,249.2 Z" fill="#c8c8c8" stroke="#444" stroke-width="0.6"/><rect x="16" y="284" width="12.2" height="12.2" fill="#c8c8c8"/><path d="M22.1,276.6 L26,280.8 H18.2 Z M22.1,303.8 L26,299.6 H18.2 Z M8.2,290.1 L12.4,286.2 V294 Z M36,290.1 L31.8,286.2 V294 Z" fill="#40b4c8"/><path d="M20.8,319.2 L28.6,327 L20.8,334.8 L13,327 Z" fill="#c8c8c8"/><path d="M14.4,338 A13,13 0 1 1 33.6,329" fill="none" stroke="#40b4c8" stroke-width="1.6"/><path d="M30.6,327.4 H36.8 L33.7,332.2 Z" fill="#40b4c8"/><rect x="10.6" y="351.2" width="24" height="24" fill="none" stroke="#40b4c8" stroke-width="1.4" stroke-dasharray="3.6 2.2"/><rect x="9.8" y="364.8" width="11.2" height="11.2" fill="#c8c8c8"/><path d="M21.6,362.6 H25.4 V366.4" fill="none" stroke="#40b4c8" stroke-width="1.3"/><path d="M20.8,439 L11.6,446.4 M20.8,439 L30.4,446.4 M20.8,439 V431" stroke="#c8c8c8" stroke-width="1.6"/><rect x="17.2" y="435.6" width="7.2" height="7.2" fill="#2a4a5a" stroke="#c8c8c8" stroke-width="1.2"/><path d="M20.8,424.8 L23.8,431.4 H17.8 Z" fill="#40b4c8"/><path d="M7.6,450 L9.6,443.6 L14.2,447.6 Z M34,450 L27.6,447.6 L32,443.6 Z" fill="#40b4c8"/><path d="M27,425.6 H38.6 M27,429.8 H38.6" stroke="#c8c8c8" stroke-width="1.1"/><rect x="33.4" y="424" width="3" height="3.2" fill="#c8c8c8"/><rect x="28.6" y="428.2" width="3" height="3.2" fill="#c8c8c8"/><rect x="8.3" y="472.5" width="27.6" height="27.2" fill="#c8c8c8" stroke="#9a9a9a" stroke-width="1"/><rect x="10.6" y="474.8" width="23" height="22.6" fill="none" stroke="#444" stroke-width="1"/><path d="M22.1,478.4 L26.1,481 L22.1,483.6 L18.1,481 Z" fill="#333"/><path d="M22.1,488.79999999999995 L26.1,491.4 L22.1,494.0 L18.1,491.4 Z" fill="#333"/><path d="M15.6,483.59999999999997 L19.6,486.2 L15.6,488.8 L11.6,486.2 Z" fill="#333"/><path d="M28.6,483.59999999999997 L32.6,486.2 L28.6,488.8 L24.6,486.2 Z" fill="#333"/><rect x="8.5" y="509.1" width="12.4" height="12.4" fill="none" stroke="#c8c8c8" stroke-width="1"/><path d="M11.299999999999999,515.3000000000001 H18.099999999999998 M14.7,511.9000000000001 V518.7" stroke="#c8c8c8" stroke-width="1.1"/><rect x="23" y="508.6" width="13.4" height="13.4" fill="#c8c8c8"/><path d="M29.7,512.9000000000001 L33.3,515.3000000000001 L29.7,517.7 L26.099999999999998,515.3000000000001 Z" fill="#333"/><rect x="8.5" y="523.9" width="12.4" height="12.4" fill="none" stroke="#c8c8c8" stroke-width="1"/><path d="M11.299999999999999,530.1 H18.099999999999998 M14.7,526.7 V533.5" stroke="#c8c8c8" stroke-width="1.1"/><rect x="23.5" y="523.9" width="12.4" height="12.4" fill="none" stroke="#c8c8c8" stroke-width="1"/><path d="M26.3,530.1 H33.1 M29.7,526.7 V533.5" stroke="#c8c8c8" stroke-width="1.1"/><rect x="8.5" y="546.1" width="12.4" height="27.4" fill="none" stroke="#c8c8c8" stroke-width="1"/><path d="M11.299999999999999,559.8000000000001 H18.099999999999998 M14.7,556.4000000000001 V563.2" stroke="#c8c8c8" stroke-width="1.1"/><rect x="23" y="545.6" width="13.4" height="28.4" fill="#c8c8c8"/><path d="M29.7,557.4000000000001 L33.3,559.8000000000001 L29.7,562.2 L26.099999999999998,559.8000000000001 Z" fill="#333"/><rect x="8.5" y="583" width="27.4" height="27.6" fill="none" stroke="#c8c8c8" stroke-width="1"/><rect x="13" y="587.2" width="2.6" height="2.6" fill="#c8c8c8"/><path d="M16,588.5 H26.6" stroke="#c8c8c8" stroke-width="1.1"/><path d="M14.3,590 V605.4 H19 M14.3,593.8 H19 M14.3,599.6 H19" fill="none" stroke="#c8c8c8" stroke-width="1"/><rect x="19" y="592.4" width="2.8" height="2.8" fill="#c8c8c8"/><path d="M22,593.8 H31" stroke="#c8c8c8" stroke-width="1.1"/><rect x="19" y="598.2" width="2.8" height="2.8" fill="#c8c8c8"/><path d="M22,599.6 H28" stroke="#c8c8c8" stroke-width="1.1"/><rect x="19" y="604" width="2.8" height="2.8" fill="#c8c8c8"/><path d="M22,605.4 H30.4" stroke="#c8c8c8" stroke-width="1.1"/><circle cx="19.4" cy="643" r="7" fill="none" stroke="#c8c8c8" stroke-width="2"/><path d="M24.6,648.4 L31.6,655.2" stroke="#c8c8c8" stroke-width="2.6" stroke-linecap="round"/><path d="M54.5,173 V189" stroke="#787878" stroke-width="1"/><rect x="53.0" y="177.6" width="3" height="7.4" rx="1" fill="#787878"/><path d="M159.5,173 V189" stroke="#787878" stroke-width="1"/><rect x="158.0" y="177.6" width="3" height="7.4" rx="1" fill="#787878"/><path d="M303.5,173 V189" stroke="#787878" stroke-width="1"/><rect x="302.0" y="177.6" width="3" height="7.4" rx="1" fill="#787878"/><path d="M447.5,173 V189" stroke="#787878" stroke-width="1"/><rect x="446.0" y="177.6" width="3" height="7.4" rx="1" fill="#787878"/><path d="M591.5,173 V189" stroke="#787878" stroke-width="1"/><rect x="590.0" y="177.6" width="3" height="7.4" rx="1" fill="#787878"/><path d="M678.5,173 V189" stroke="#787878" stroke-width="1"/><rect x="677.0" y="177.6" width="3" height="7.4" rx="1" fill="#787878"/><path d="M708.5,173 V189" stroke="#787878" stroke-width="1"/><rect x="707.0" y="177.6" width="3" height="7.4" rx="1" fill="#787878"/><path d="M776.5,173 V189" stroke="#787878" stroke-width="1"/><rect x="775.0" y="177.6" width="3" height="7.4" rx="1" fill="#787878"/><path d="M61,175 L63,173 H75.6 Q76.4,173 76.4,173.8 V188.2 H61 Z" fill="#2f86ac"/><path d="M63,173 H75.4 Q76.2,173 76.2,173.8 V186 H63 Z" fill="#3aa9d8"/><path d="M61,175 L63,173 V186 L61,188 Z" fill="#7fcdee"/><text x="69.6" y="184" font-size="10" font-weight="bold" fill="#fff" text-anchor="middle" font-family="Liberation Sans, sans-serif">A</text><rect x="82.4" y="175.8" width="10.8" height="10.8" fill="none" stroke="#9a9a9a" stroke-width="1.2"/><rect x="84.4" y="177.8" width="6.8" height="6.8" fill="#40b4c8"/><circle cx="82.4" cy="175.8" r="1.5" fill="#a8a8a8"/><circle cx="82.4" cy="186.6" r="1.5" fill="#a8a8a8"/><circle cx="93.2" cy="175.8" r="1.5" fill="#a8a8a8"/><circle cx="93.2" cy="186.6" r="1.5" fill="#a8a8a8"/><rect x="100" y="174.6" width="13.6" height="12.4" fill="#4a5560"/><path d="M102,179 H110 V185" fill="none" stroke="#5a6874" stroke-width="1" stroke-dasharray="1 1"/><circle cx="125.8" cy="181" r="6.8" fill="#585858"/><path d="M125.8,181 L121,176.2 A6.8,6.8 0 0 1 130.6,176.2 Z" fill="#4a5a74"/><path d="M125.8,181 L130.6,176.2 A6.8,6.8 0 0 1 132,178.4 Z" fill="#4a6a4a"/><path d="M125.8,181 L121,176.2 A6.8,6.8 0 0 0 120.4,185 Z" fill="#6a4a50"/><rect x="140.4" y="173.6" width="12.4" height="10" fill="#4a5a4a"/><rect x="138.8" y="175.2" width="12.4" height="10" fill="#5a4a54"/><rect x="137.2" y="176.8" width="12.6" height="11" fill="#4a5864"/><path d="M138.4,186.4 L141.6,182.6 L143.6,184.4 L146.6,181 L148.8,186.4 Z" fill="#5e6e78"/><rect x="167.8" y="177.6" width="9.8" height="6.8" rx="0.6" fill="#c8c8c8"/><path d="M178.20000000000002,181 L182.0,177.8 V184.2 Z" fill="#c8c8c8"/><rect x="188" y="174.4" width="8.8" height="5" fill="#c8c8c8"/><path d="M197.4,177.6 L201,174.6 V180.6 Z" fill="#c8c8c8"/><rect x="186.4" y="181" width="7.6" height="6.2" fill="#40b4c8" stroke="#444" stroke-width="0.6"/><path d="M188.2,181 V179.4 Q188.2,177.4 190.2,177.4 Q192.2,177.4 192.2,179.4 V181" fill="none" stroke="#40b4c8" stroke-width="1.3"/><rect x="189.7" y="183" width="1" height="2.2" fill="#444"/><rect x="207.6" y="174.4" width="8.8" height="5" fill="#c8c8c8"/><path d="M217,177.6 L220.6,174.6 V180.6 Z" fill="#c8c8c8"/><circle cx="210.4" cy="183" r="5" fill="#444"/><rect x="209.3" y="178.4" width="2.2" height="9.2" fill="#40b4c8" transform="rotate(0 210.4 183)"/><rect x="209.3" y="178.4" width="2.2" height="9.2" fill="#40b4c8" transform="rotate(45 210.4 183)"/><rect x="209.3" y="178.4" width="2.2" height="9.2" fill="#40b4c8" transform="rotate(90 210.4 183)"/><rect x="209.3" y="178.4" width="2.2" height="9.2" fill="#40b4c8" transform="rotate(135 210.4 183)"/><circle cx="210.4" cy="183" r="3" fill="#40b4c8"/><circle cx="210.4" cy="183" r="1.6800000000000002" fill="#444"/><path d="M228.6,175 H234.8 V186.4 L231.7,183.6 L228.6,186.4 Z" fill="#c8c8c8"/><path d="M249.4,183.4 L255.8,174.8 V183.6 L249.8,186.6 Z" fill="#40b4c8"/><path d="M244.2,187.8 L249.6,181.6 V187.8 Z M251,186.4 L257.8,184.2 L255.6,187.8 H248.6 Z" fill="#c8c8c8"/><path d="M264,180.6 H271.6 M267.8,174.6 V183.6" stroke="#c8c8c8" stroke-width="1.1"/><path d="M267.8,173.6 L269.8,176 H265.8 Z M263,180.6 L265.4,178.6 V182.6 Z" fill="#c8c8c8"/><circle cx="273.2" cy="181.6" r="3" fill="none" stroke="#40b4c8" stroke-width="1.4"/><path d="M271,184 L268,187.4" stroke="#40b4c8" stroke-width="1.6"/><path d="M293,174.6 L295,176.6 L287,185 L284.8,183 Z" fill="#40b4c8"/><path d="M284.4,183.6 L286.4,185.6 L283,187.4 Z" fill="#40b4c8"/><rect x="310" y="172" width="18" height="18" fill="#5285a6"/><path d="M314.5,175.5 H325.5 V187 H314.5 Z M318.2,175.5 V187 M321.8,175.5 V187 M314.5,179.3 H325.5 M314.5,183.2 H325.5" fill="none" stroke="#e8e8e8" stroke-width="1.1"/><rect x="331" y="175" width="14" height="11.6" fill="none" stroke="#c8c8c8" stroke-width="1.1"/><path d="M331,177.6 H345 M331,184 H345" stroke="#c8c8c8" stroke-width="0.9"/><path d="M332.4,176.3 H344" stroke="#c8c8c8" stroke-width="0.9" stroke-dasharray="1.4 1.2"/><path d="M332.4,185.3 H344" stroke="#c8c8c8" stroke-width="0.9" stroke-dasharray="1.4 1.2"/><rect x="350.2" y="175" width="13.4" height="11.6" fill="none" stroke="#c8c8c8" stroke-width="1.1"/><circle cx="357" cy="180.8" r="3" fill="#40b4c8"/><rect x="367.5" y="172" width="17" height="18" fill="#4a4a4a" stroke="#333" stroke-width="1"/><circle cx="376" cy="181" r="3.6" fill="#3a3a3a"/><rect x="388.2" y="175" width="13.6" height="11.6" fill="none" stroke="#c8c8c8" stroke-width="1.1"/><path d="M389.4,180.8 H400.6" stroke="#40b4c8" stroke-width="1.6" stroke-dasharray="1.2 1"/><path d="M395,176.2 V185.6" stroke="#40b4c8" stroke-width="1.6" stroke-dasharray="1.2 1"/><rect x="407.4" y="175" width="13.4" height="11.6" fill="none" stroke="#c8c8c8" stroke-width="1.1"/><circle cx="416.6" cy="179" r="2.2" fill="#40b4c8"/><path d="M409.6,185 L412.8,180.4 L416,185 Z" fill="#40b4c8"/><rect x="426.2" y="175" width="13.6" height="11.6" fill="none" stroke="#c8c8c8" stroke-width="1.1"/><text x="433" y="185" font-size="10.5" font-weight="bold" fill="#40b4c8" text-anchor="middle" font-family="Liberation Serif, serif">T</text><path d="M463.6,174 L470.6,177.4 L463.6,180.8 L456.6,177.4 Z" fill="none" stroke="#c8c8c8" stroke-width="1"/><path d="M456.6,177.4 L463.6,180.8 V188 L456.6,184.6 Z" fill="none" stroke="#c8c8c8" stroke-width="1"/><path d="M470.6,177.4 L463.6,180.8 V188 L470.6,184.6 Z" fill="none" stroke="#c8c8c8" stroke-width="1"/><path d="M463.6,181 V174.6 M456.8,184.4 L463.6,181 L470.4,184.4" stroke="#8a8a8a" stroke-width="0.6" fill="none" stroke-dasharray="1 1"/><rect x="473" y="172" width="18" height="18" fill="#5285a6"/><path d="M482,173.8 L489,177.20000000000002 L482,180.60000000000002 L475,177.20000000000002 Z" fill="#8fe0ee" stroke="#d8f0f4" stroke-width="1"/><path d="M475,177.20000000000002 L482,180.60000000000002 V187.8 L475,184.4 Z" fill="#46b8cc" stroke="#d8f0f4" stroke-width="1"/><path d="M489,177.20000000000002 L482,180.60000000000002 V187.8 L489,184.4 Z" fill="#6fd0e0" stroke="#d8f0f4" stroke-width="1"/><circle cx="501" cy="181" r="6.2" fill="#c8c8c8"/><path d="M501,174.8 A6.2,6.2 0 0 1 501,187.2 Z" fill="#444"/><rect x="501.0" y="175.4" width="1.6" height="1.6" fill="#c8c8c8"/><rect x="501.0" y="178.6" width="1.6" height="1.6" fill="#c8c8c8"/><rect x="501.0" y="181.8" width="1.6" height="1.6" fill="#c8c8c8"/><rect x="501.0" y="185.0" width="1.6" height="1.6" fill="#c8c8c8"/><rect x="502.6" y="177.0" width="1.6" height="1.6" fill="#c8c8c8"/><rect x="502.6" y="180.20000000000002" width="1.6" height="1.6" fill="#c8c8c8"/><rect x="502.6" y="183.4" width="1.6" height="1.6" fill="#c8c8c8"/><rect x="504.2" y="178.6" width="1.6" height="1.6" fill="#c8c8c8"/><rect x="504.2" y="181.8" width="1.6" height="1.6" fill="#c8c8c8"/><rect x="505.8" y="180.20000000000002" width="1.6" height="1.6" fill="#c8c8c8"/><path d="M520.4,174 L527.4,177.4 L520.4,180.8 L513.4,177.4 Z" fill="#6fd0e0" stroke="#c8c8c8" stroke-width="1"/><path d="M513.4,177.4 L520.4,180.8 V188 L513.4,184.6 Z" fill="#46b8cc" stroke="#c8c8c8" stroke-width="1"/><path d="M527.4,177.4 L520.4,180.8 V188 L527.4,184.6 Z" fill="#5cc4d6" stroke="#c8c8c8" stroke-width="1"/><path d="M520.4,177.6 V174.6" stroke="#c8c8c8" stroke-width="0.8"/><circle cx="539" cy="181" r="6.2" fill="#444"/><rect x="532.6" y="177.79999999999998" width="1.6" height="1.6" fill="#c8c8c8"/><rect x="532.6" y="181.0" width="1.6" height="1.6" fill="#c8c8c8"/><rect x="534.2" y="176.2" width="1.6" height="1.6" fill="#c8c8c8"/><rect x="534.2" y="179.4" width="1.6" height="1.6" fill="#c8c8c8"/><rect x="534.2" y="182.6" width="1.6" height="1.6" fill="#c8c8c8"/><rect x="535.8000000000001" y="174.6" width="1.6" height="1.6" fill="#c8c8c8"/><rect x="535.8000000000001" y="177.79999999999998" width="1.6" height="1.6" fill="#c8c8c8"/><rect x="535.8000000000001" y="181.0" width="1.6" height="1.6" fill="#c8c8c8"/><rect x="535.8000000000001" y="184.2" width="1.6" height="1.6" fill="#c8c8c8"/><rect x="537.4" y="176.2" width="1.6" height="1.6" fill="#c8c8c8"/><rect x="537.4" y="179.4" width="1.6" height="1.6" fill="#c8c8c8"/><rect x="537.4" y="182.6" width="1.6" height="1.6" fill="#c8c8c8"/><rect x="537.4" y="185.79999999999998" width="1.6" height="1.6" fill="#c8c8c8"/><rect x="539.0" y="174.6" width="1.6" height="1.6" fill="#c8c8c8"/><rect x="539.0" y="177.79999999999998" width="1.6" height="1.6" fill="#c8c8c8"/><rect x="539.0" y="181.0" width="1.6" height="1.6" fill="#c8c8c8"/><rect x="539.0" y="184.2" width="1.6" height="1.6" fill="#c8c8c8"/><rect x="540.6" y="176.2" width="1.6" height="1.6" fill="#c8c8c8"/><rect x="540.6" y="179.4" width="1.6" height="1.6" fill="#c8c8c8"/><rect x="540.6" y="182.6" width="1.6" height="1.6" fill="#c8c8c8"/><rect x="540.6" y="185.79999999999998" width="1.6" height="1.6" fill="#c8c8c8"/><rect x="542.2" y="177.79999999999998" width="1.6" height="1.6" fill="#c8c8c8"/><rect x="542.2" y="181.0" width="1.6" height="1.6" fill="#c8c8c8"/><rect x="542.2" y="184.2" width="1.6" height="1.6" fill="#c8c8c8"/><rect x="543.8000000000001" y="179.4" width="1.6" height="1.6" fill="#c8c8c8"/><rect x="543.8000000000001" y="182.6" width="1.6" height="1.6" fill="#c8c8c8"/><path d="M558.2,176 Q562.6,176.4 562,181 Q561.6,182.8 560.4,184 V186 H556 V184 Q554.8,182.8 554.4,181 Q553.8,176.4 558.2,176 Z" fill="#c8c8c8"/><rect x="556.4" y="186.8" width="3.6" height="1.4" fill="#c8c8c8"/><path d="M558.2,173 V174.6 M552,177 L553.4,177.8 M564.4,177 L563,177.8 M551.4,181.6 H553 M563.4,181.6 H565" stroke="#c8c8c8" stroke-width="1"/><circle cx="579.2" cy="180.2" r="5" fill="#40b4c8"/><path d="M570.6,184 L574.6,181.6 L576.6,184.2 L572.4,186.8 Z" fill="#c8c8c8"/><path d="M571.6,185.6 L575.8,183" stroke="#444" stroke-width="0.6"/><circle cx="607.6" cy="178.8" r="5.4" fill="#c8c8c8"/><path d="M601,185 L606,183 L614,186.4 L608.6,188.6 Z" fill="#40b4c8" opacity="0.9"/><path d="M603,184.8 L610,187.6 M605,183.8 L612,186.8" stroke="#444" stroke-width="0.5"/><circle cx="624.4" cy="182.6" r="4.6" fill="#6a6a6a"/><circle cx="626.4" cy="180.6" r="4.6" fill="#8a8a8a"/><circle cx="628.6" cy="178.4" r="4.8" fill="#c8c8c8"/><path d="M646.4,175 A6,6 0 0 0 646.4,187" fill="none" stroke="#40b4c8" stroke-width="2.2"/><rect x="646.6" y="174.4" width="1.6" height="1.6" fill="#e0e0e0"/><rect x="648.4" y="176" width="1.6" height="1.6" fill="#e0e0e0"/><rect x="650" y="177.8" width="1.6" height="1.6" fill="#e0e0e0"/><rect x="650" y="181" width="1.6" height="1.6" fill="#e0e0e0"/><rect x="650" y="184.2" width="1.6" height="1.6" fill="#e0e0e0"/><rect x="648.4" y="186" width="1.6" height="1.6" fill="#e0e0e0"/><rect x="646.6" y="187.4" width="1.6" height="1.6" fill="#e0e0e0"/><rect x="649.2" y="179.4" width="1.6" height="1.6" fill="#e0e0e0"/><rect x="649.2" y="182.6" width="1.6" height="1.6" fill="#e0e0e0"/><rect x="655.5" y="172" width="17.5" height="18" fill="#3e3e3e" stroke="#333" stroke-width="1"/><rect x="658.6" y="175" width="7" height="7" fill="#3a4a52"/><rect x="662" y="179" width="8" height="8" fill="#34525c"/><rect x="688" y="175.4" width="8" height="7.6" fill="none" stroke="#40b4c8" stroke-width="1.4" stroke-dasharray="2.4 1.4"/><path transform="translate(693.6,178.6) scale(0.9)" d="M0,0 L0,10.6 L2.6,8.4 L4.4,12.4 L6.4,11.5 L4.6,7.6 L8,7.4 Z" fill="#c8c8c8" stroke="#444" stroke-width="0.8"/><rect x="716" y="172.6" width="15.6" height="17" fill="#3c3c3c"/><rect x="722.4" y="175.6" width="7.2" height="7.2" fill="none" stroke="#c8c8c8" stroke-width="1.5"/><rect x="718.4" y="179" width="7.6" height="7.6" fill="#c8c8c8" stroke="#3c3c3c" stroke-width="0.8"/><rect x="722.8" y="180" width="2.4" height="2.2" fill="#3c3c3c"/><rect x="735.4" y="172.6" width="15.6" height="17" fill="#3c3c3c"/><path d="M741.6,179 V175.6 H749 V183 H746" fill="none" stroke="#c8c8c8" stroke-width="1.4"/><rect x="737.6" y="179" width="8" height="8" fill="#c8c8c8"/><rect x="754.4" y="172.6" width="15.6" height="17" fill="#3c3c3c"/><rect x="756.6" y="175" width="11.2" height="12" fill="none" stroke="#c8c8c8" stroke-width="1.3"/><path d="M759.6,178 L765.2,184.4" stroke="#c8c8c8" stroke-width="2.2" stroke-linecap="round"/><circle cx="759.4" cy="177.8" r="1.3" fill="#c8c8c8"/><circle cx="792.8" cy="181" r="6.2" fill="#c8c8c8"/><path d="M792.8,181 L799.10,182.11" stroke="#444" stroke-width="1.2"/><path d="M792.8,181 L794.99,187.01" stroke="#444" stroke-width="1.2"/><path d="M792.8,181 L788.69,185.90" stroke="#444" stroke-width="1.2"/><path d="M792.8,181 L786.50,179.89" stroke="#444" stroke-width="1.2"/><path d="M792.8,181 L790.61,174.99" stroke="#444" stroke-width="1.2"/><path d="M792.8,181 L796.91,176.10" stroke="#444" stroke-width="1.2"/><circle cx="792.8" cy="181" r="2.2" fill="#444"/><rect x="853.6" y="175" width="5.4" height="12" fill="#c8c8c8"/><circle cx="853.4" cy="181" r="4.6" fill="#444"/><path d="M853.4,176.4 A4.6,4.6 0 0 0 853.4,185.6 Z" fill="#c8c8c8"/><rect x="906" y="172" width="18" height="18" fill="#5285a6"/><circle cx="915" cy="181" r="6.6" fill="#40b4c8"/><circle cx="915" cy="181" r="6" fill="none" stroke="#2a6a78" stroke-width="0.8"/><text x="915" y="183.4" font-size="6.6" font-weight="bold" fill="#1e4a58" text-anchor="middle" font-family="Liberation Sans, sans-serif">ON</text><path d="M1110.2,178.4 H1120.4 L1115.3,183.6 Z" fill="#c8c8c8"/><defs><linearGradient id="vcf" x1="0" x2="0" y1="0" y2="1"><stop offset="0" stop-color="#ababab"/><stop offset="1" stop-color="#9e9e9e"/></linearGradient><filter id="b1"><feGaussianBlur stdDeviation="0.5"/></filter></defs><g filter="url(#b1)"><path d="M1365.6,226.9 L1408.6,225.9 L1422.7,228.4 L1422.4,275 L1376,279.4 L1366.3,267.8 Z" fill="#686868"/><path d="M1368,227.8 L1408.2,226.9 L1419,228.5 L1377,229.5 Z" fill="#b2b2b2"/><path d="M1367,229 L1374.4,231.2 L1374.4,275.4 L1367.6,267.2 Z" fill="#9a9a9a"/><path d="M1377.8,231.2 L1421.4,230 L1421.2,273.8 L1377.8,277.8 Z" fill="url(#vcf)"/><rect x="1368.6" y="246" width="4" height="9" fill="#888" opacity="0.7"/></g><text x="1383.4" y="257.6" transform="rotate(-2.4 1383.4 257.6)" font-size="8.6" font-weight="bold" fill="#4e5862" font-family="Liberation Sans, sans-serif" textLength="33.4" lengthAdjust="spacingAndGlyphs">FRONT</text><path d="M75.6,972.4 V959.4" stroke="#00e000" stroke-width="1.3"/><path d="M75.6,972.4 H86 L88.8,971.4" stroke="#e8101c" stroke-width="1.2" fill="none"/><path d="M75.6,972.4 L80,974.6" stroke="#1020f0" stroke-width="1.4"/><text x="73" y="954.8" font-size="9" font-weight="bold" fill="#00e000" font-family="Liberation Sans, sans-serif">y</text><text x="87.6" y="969.8" font-size="9" font-weight="bold" fill="#e8101c" font-family="Liberation Sans, sans-serif">x</text><text x="78" y="972" font-size="8.4" font-weight="bold" font-style="italic" fill="#1020f0" font-family="Liberation Sans, sans-serif">z</text><g transform="translate(7,964)"><path d="M3.2,21.8 L3.2,29.2 Q3.2,32 6,32 L30,32 L30,5.4 L26.6,21.8 Z" fill="#2e6f8a"/><path d="M0.2,3.6 L5,0.2 L26.4,0.2 Q27.8,0.2 27.8,1.6 L27.8,22 L5,22 L0.2,24.8 Z" fill="#37a6cf"/><path d="M0.2,3.6 L5,0.2 L5,22 L0.2,24.8 Z" fill="#8fd2ee"/><text x="16.2" y="17.6" font-size="18" font-weight="bold" fill="#fff" text-anchor="middle" font-family="Liberation Sans, sans-serif">M</text><text x="16.4" y="29.6" font-size="6.6" font-weight="bold" fill="#fff" text-anchor="middle" font-family="Liberation Sans, sans-serif" textLength="11.6" lengthAdjust="spacingAndGlyphs">AYA</text></g><circle cx="24" cy="1022" r="8.2" fill="#86b23c"/><text x="24" y="1027" font-size="14" font-weight="bold" fill="#444" text-anchor="middle" font-family="Liberation Sans, sans-serif">?</text><rect x="1892.8" y="1012.8" width="18.6" height="3.2" fill="#c8c8c8"/><rect x="1892.8" y="1017.2" width="18.6" height="13.8" fill="#c8c8c8"/><circle cx="1894.6" cy="1014.4" r="0.6" fill="#333"/><circle cx="1896.6" cy="1014.4" r="0.6" fill="#333"/><circle cx="1898.6" cy="1014.4" r="0.6" fill="#333"/><text x="1902" y="1027.4" font-size="10" font-weight="bold" fill="#333" text-anchor="middle" font-family="Liberation Sans, sans-serif" textLength="12" lengthAdjust="spacingAndGlyphs">{;}</text><path d="M1904.6,176.8 L1907.6,180 L1903.4,186.8 L1902.8,184.2 L1898.4,181 Z" fill="#b8b8b8"/><path d="M1900.6,183.6 L1896.8,188.6" stroke="#a8a8a8" stroke-width="1.3"/></svg>
</body></html>
